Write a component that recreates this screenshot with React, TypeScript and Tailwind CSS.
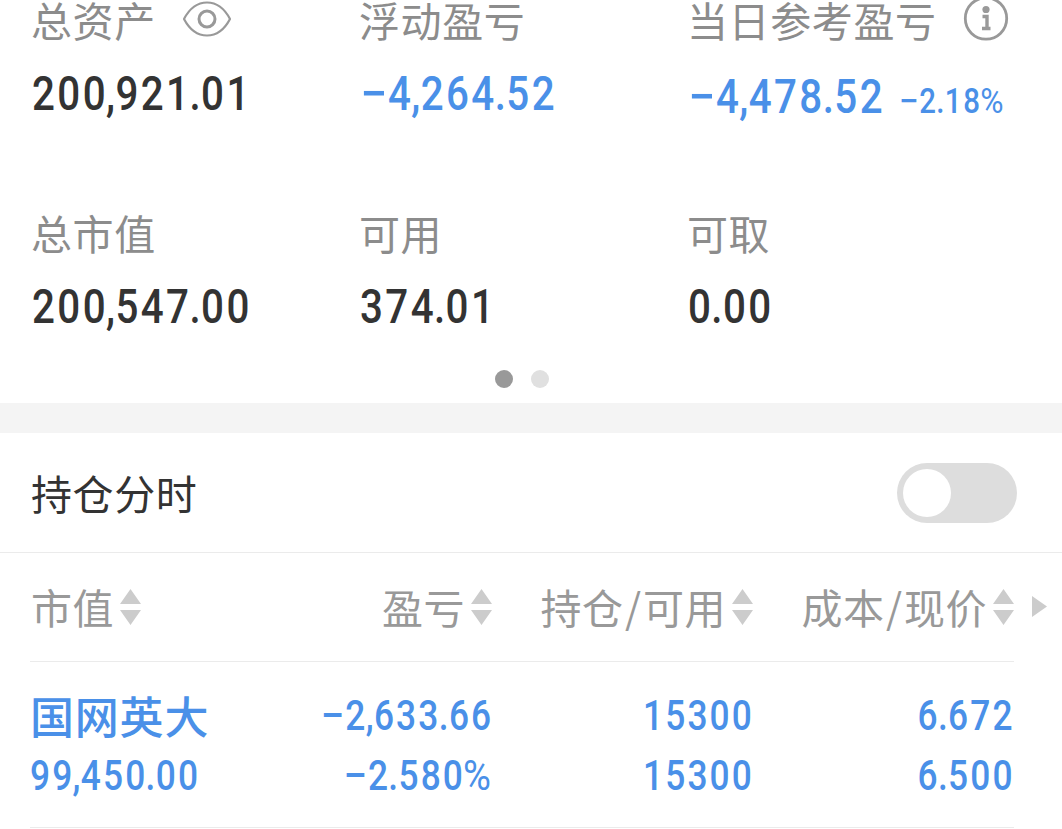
import * as React from "react";
import clsx from "clsx";

const summary = [
  { label: "总资产", value: "200,921.01", icon: "eye" },
  { label: "浮动盈亏", value: "−4,264.52", down: true },
  { label: "当日参考盈亏", value: "−4,478.52", down: true, percent: "−2.18%", icon: "info" },
  { label: "总市值", value: "200,547.00" },
  { label: "可用", value: "374.01" },
  { label: "可取", value: "0.00" },
];

const columns = ["市值", "盈亏", "持仓/可用", "成本/现价"];

const holdings = [
  {
    name: "国网英大",
    marketValue: "99,450.00",
    cells: [
      ["−2,633.66", "−2.580%"],
      ["15300", "15300"],
      ["6.672", "6.500"],
    ],
  },
];

function EyeIcon() {
  return (
    <svg className="ml-[26px] h-[36px] w-[50px]" viewBox="0 0 50 36" fill="none" stroke="#999">
      <path
        d="M2 18C7 8.500 15 1.500 25 1.500S43 8.500 48 18C43 27.500 35 34.500 25 34.500S7 27.500 2 18Z"
        strokeWidth="2.200"
        strokeLinejoin="round"
      />
      <circle cx="25" cy="18" r="8" strokeWidth="3" />
    </svg>
  );
}

function InfoIcon() {
  return (
    <svg className="ml-[26px] h-[46px] w-[46px]" viewBox="0 0 46 46" fill="none">
      <circle cx="23" cy="22.500" r="20.700" stroke="#999" strokeWidth="2.800" />
      <circle cx="23" cy="13.500" r="3.600" fill="#999" />
      <path d="M19.500 20.500H24V32.500M19 32.500H27.500" stroke="#999" strokeWidth="3.400" />
    </svg>
  );
}

function SortIcon() {
  return (
    <svg className="ml-[6px] h-[36px] w-[21px]" viewBox="0 0 21 36" fill="#ccc">
      <path d="M10.500 0L21 15H0ZM10.500 36L21 21H0Z" />
    </svg>
  );
}

// Condensed digits, with the separators pulled in and the sign widened
function Num({ children, className }: { children: string; className?: string }) {
  return (
    <span
      className={clsx(
        "inline-block scale-x-84 font-['Roboto',sans-serif] font-medium tracking-[0.06em] whitespace-nowrap",
        className
      )}
    >
      {children.split(/([−.,%])/).map((part, i) => (
        <span
          key={i}
          className={clsx(
            (part === "." || part === ",") && "-mx-[0.05em]",
            part === "−" && "mr-[0.07em] inline-block origin-left scale-x-120",
            part === "%" && "inline-block origin-right scale-x-108 font-normal"
          )}
        >
          {part}
        </span>
      ))}
    </span>
  );
}

function ColumnLabel({ text }: { text: string }) {
  const [first, second] = text.split("/");
  return (
    <span className="-mt-px tracking-[0.5px]">
      {first}
      {second && <span className="px-[1.5px]">/</span>}
      {second}
    </span>
  );
}

export default function App() {
  const [enabled, setEnabled] = React.useState(false);

  return (
    <div className="h-[829px] w-[1062px] overflow-hidden bg-white font-['Noto_Sans_CJK_SC',sans-serif] text-[#333]">
      <section className="h-[403px]">
        <div className="grid grid-cols-[328px_328px_374px] grid-rows-[213px_157px] pl-[32px]">
          {summary.map(({ label, value, down, percent, icon }) => (
            <div key={label}>
              <div className="-ml-px flex h-[38px] items-center text-[41px] leading-[38px] tracking-[0.6px] whitespace-nowrap text-[#8c8c8c]">
                {label}
                {icon === "eye" && <EyeIcon />}
                {icon === "info" && <InfoIcon />}
              </div>
              <div
                className={clsx(
                  "flex items-baseline leading-[48px]",
                  percent ? "mt-[35px]" : "mt-[32px]",
                  down && "text-[#4a90e8]"
                )}
              >
                <Num className="w-[211px] origin-left text-[48px]">{value}</Num>
                {percent && <Num className="origin-left text-[35px]">{percent}</Num>}
              </div>
            </div>
          ))}
        </div>
        <div className="flex gap-[18px] pl-[495px]">
          <span className="h-[18px] w-[18px] rounded-full bg-[#999]" />
          <span className="h-[18px] w-[18px] rounded-full bg-[#e0e0e0]" />
        </div>
      </section>

      <div className="h-[30px] bg-[#f4f4f4]" />

      <section className="flex h-[120px] items-center justify-between border-b border-[#ebebeb] pr-[45px] pl-[31px]">
        <h2 className="text-[41px] leading-none tracking-[0.6px]">持仓分时</h2>
        <button
          role="switch"
          aria-checked={enabled}
          onClick={() => setEnabled(!enabled)}
          className={clsx(
            "flex h-[60px] w-[120px] items-center rounded-full p-[6px]",
            enabled ? "justify-end bg-[#4a90e8]" : "justify-start bg-[#ddd]"
          )}
        >
          <span className="h-[48px] w-[48px] rounded-full bg-white" />
        </button>
      </section>

      <section>
        <div className="flex items-center">
          <div className="ml-[30px] grid h-[109px] w-[984px] grid-cols-[201px_261px_261px_261px] border-b border-[#ebebeb] text-[41px] leading-none text-[#999]">
            {columns.map((text, i) => (
              <div
                key={text}
                className={clsx(
                  "flex items-center whitespace-nowrap",
                  i === 0 ? "pl-px" : "justify-end"
                )}
              >
                <ColumnLabel text={text} />
                <SortIcon />
              </div>
            ))}
          </div>
          <svg className="-mt-[2px] ml-[18px] h-[21px] w-[15px]" viewBox="0 0 15 21" fill="#ccc">
            <path d="M0 0L15 10.500L0 21Z" />
          </svg>
        </div>

        {holdings.map(({ name, marketValue, cells }) => (
          <div
            key={name}
            className="ml-[30px] grid h-[166px] w-[984px] grid-cols-[201px_261px_261px_261px] border-b border-[#ebebeb] pt-[24px] text-[42px] leading-[60px] text-[#4a90e8]"
          >
            <div className="flex flex-col">
              <span className="h-[60px] text-[44px] leading-[58px] font-medium tracking-[0.8px] whitespace-nowrap">
                {name}
              </span>
              <Num className="origin-left">{marketValue}</Num>
            </div>
            {cells.map(([top, bottom], i) => (
              <div key={i} className="-mr-px flex flex-col items-end">
                <Num className="origin-right">{top}</Num>
                <Num className="origin-right">{bottom}</Num>
              </div>
            ))}
          </div>
        ))}
      </section>
    </div>
  );
}
